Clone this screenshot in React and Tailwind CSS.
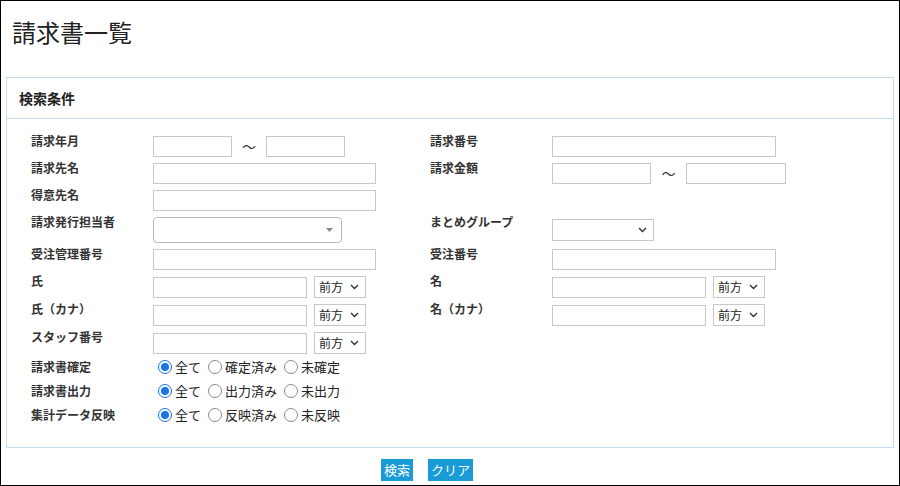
const F = { fontFamily: '"Noto Sans CJK JP","Noto Sans",sans-serif' };
const inp = "h-[21px] border border-[#c8c8c8] bg-white shrink-0";
const Chev = () => (
  <svg width="9" height="6" viewBox="0 0 9 6" className="shrink-0"><path d="M1 1l3.5 3.5L8 1" fill="none" stroke="#333" strokeWidth="1.4"/></svg>
);
const Sel = ({ w = "w-[52px]", label = "" }) => (
  <div className={`h-[22px] ${w} border border-[#c8c8c8] bg-white flex items-center justify-between pl-[4px] pr-[6px] text-[12px] text-[#222] shrink-0`}>
    <span>{label}</span><Chev />
  </div>
);
const Label = ({ children, w = "w-[122px]" }) => (
  <div className={`${w} shrink-0 text-[12px] font-bold text-[#333] leading-[16px] -mt-[3px] self-start`}>{children}</div>
);
const Radio = ({ on, label }) => (
  <span className="flex items-center gap-[3px] mr-[7px]">
    {on ? (
      <span className="w-[14px] h-[14px] rounded-full border-[1.5px] border-[#1a73e8] flex items-center justify-center"><span className="w-[8px] h-[8px] rounded-full bg-[#1a73e8]" /></span>
    ) : (
      <span className="w-[14px] h-[14px] rounded-full border border-[#8a8a8a] bg-white" />
    )}
    <span className="text-[13px] text-[#222]">{label}</span>
  </span>
);
const Half = ({ children }) => <div className="w-[399px] flex items-center shrink-0">{children}</div>;

export default function App() {
  return (
    <div style={F} className="w-[900px] h-[486px] border border-black bg-white overflow-hidden flex flex-col">
      <div className="h-[76px] pl-[11px] pt-[15px] text-[24px] text-[#222] leading-[32px]">請求書一覧</div>
      <div className="mx-[5px] border border-[#c5daee] h-[371px] flex flex-col">
        <div className="h-[41px] border-b border-[#c5daee] pl-[12px] flex items-center text-[14px] font-bold text-[#222]">検索条件</div>
        <div className="pl-[24px] pt-[17px] flex flex-col gap-[6px]">
          <div className="flex">
            <Half><Label>請求年月</Label><div className={`${inp} w-[79px]`} /><span className="w-[34px] text-center text-[14px] text-[#333]">～</span><div className={`${inp} w-[79px]`} /></Half>
            <Half><Label>請求番号</Label><div className={`${inp} w-[224px]`} /></Half>
          </div>
          <div className="flex">
            <Half><Label>請求先名</Label><div className={`${inp} w-[223px]`} /></Half>
            <Half><Label>請求金額</Label><div className={`${inp} w-[99px]`} /><span className="w-[35px] text-center text-[14px] text-[#333]">～</span><div className={`${inp} w-[100px]`} /></Half>
          </div>
          <div className="flex">
            <Half><Label>得意先名</Label><div className={`${inp} w-[223px]`} /></Half>
          </div>
          <div className="flex">
            <Half><Label>請求発行担当者</Label>
              <div className="w-[189px] h-[26px] rounded-[4px] border border-[#b8b8b8] bg-white flex items-center justify-end pr-[8px]"><svg width="7" height="4" viewBox="0 0 7 4"><path d="M0 0h7L3.5 4z" fill="#888"/></svg></div>
            </Half>
            <Half><Label>まとめグループ</Label><Sel w="w-[102px]" /></Half>
          </div>
          <div className="flex">
            <Half><Label>受注管理番号</Label><div className={`${inp} w-[223px]`} /></Half>
            <Half><Label>受注番号</Label><div className={`${inp} w-[224px]`} /></Half>
          </div>
          <div className="flex">
            <Half><Label>氏</Label><div className={`${inp} w-[154px] mr-[7px]`} /><Sel label="前方" /></Half>
            <Half><Label>名</Label><div className={`${inp} w-[154px] mr-[7px]`} /><Sel label="前方" /></Half>
          </div>
          <div className="flex">
            <Half><Label>氏（カナ）</Label><div className={`${inp} w-[154px] mr-[7px]`} /><Sel label="前方" /></Half>
            <Half><Label>名（カナ）</Label><div className={`${inp} w-[154px] mr-[7px]`} /><Sel label="前方" /></Half>
          </div>
          <div className="flex">
            <Half><Label>スタッフ番号</Label><div className={`${inp} w-[154px] mr-[7px]`} /><Sel label="前方" /></Half>
          </div>
          <div className="flex flex-col gap-[4px] -mt-[3px]">
            {[["請求書確定", "確定済み", "未確定"], ["請求書出力", "出力済み", "未出力"], ["集計データ反映", "反映済み", "未反映"]].map(([l, a, b]) => (
              <div key={l} className="flex items-center h-[20px]">
                <div className="w-[127px] shrink-0 text-[12px] font-bold text-[#333]">{l}</div>
                <Radio on label="全て" /><Radio label={a} /><Radio label={b} />
              </div>
            ))}
          </div>
        </div>
      </div>
      <div className="flex justify-center gap-[15px] mt-[11px] pr-[46px]">
        <button className="h-[22px] px-[3px] bg-[#1a9ad6] text-white text-[13px] leading-[22px]">検索</button>
        <button className="h-[22px] px-[3px] bg-[#1a9ad6] text-white text-[13px] leading-[22px]">クリア</button>
      </div>
    </div>
  );
}
